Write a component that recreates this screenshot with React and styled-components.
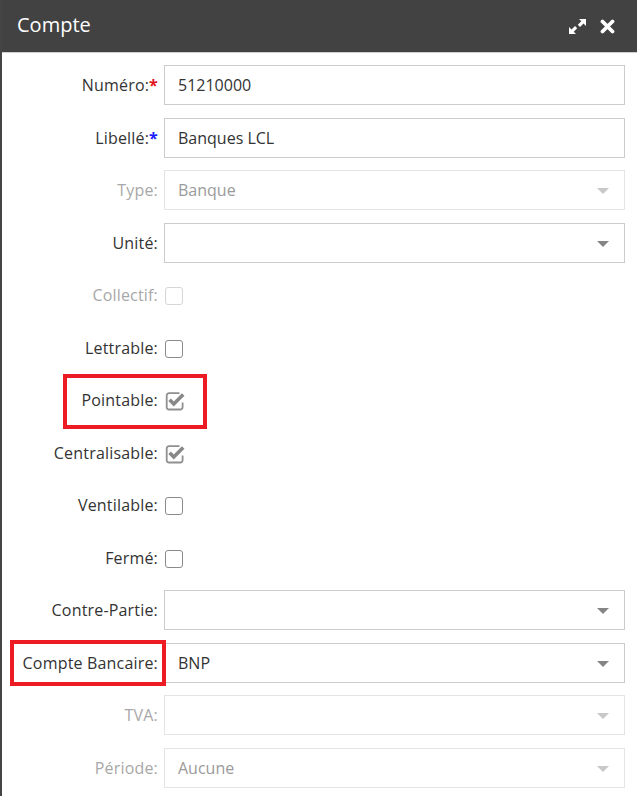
import React from "react";
import styled, { createGlobalStyle } from "styled-components";

const Global = createGlobalStyle`
  html, body { margin: 0; padding: 0; background: #fff; overflow: hidden; }
  body { font-family: "Open Sans", "Noto Sans", sans-serif; }
  * { box-sizing: border-box; }
`;

const Dialog = styled.div`
  width: 637px;
  height: 796px;
  border-left: 2px solid #454545;
  background: #fff;
  display: flex;
  flex-direction: column;
`;

const Header = styled.div`
  height: 53px;
  flex: none;
  background: #424242;
  border-bottom: 1px solid #cfcfcf;
  display: flex;
  align-items: center;
  padding: 0 22px 0 15px;
  color: #fff;
`;

const Title = styled.div`
  flex: 1;
  font-size: 20px;
  line-height: 1;
  padding-bottom: 3px;
`;

const Tools = styled.div`
  display: flex;
  align-items: center;
  gap: 13px;
`;

const Body = styled.div`
  padding: 12px 12px 0 0;
  display: flex;
  flex-direction: column;
  gap: 12.54px;
`;

const Row = styled.div`
  position: relative;
  display: grid;
  grid-template-columns: 156px 1fr;
  column-gap: 6px;
  align-items: center;
  height: 40px;
`;

const Label = styled.label`
  text-align: right;
  font-size: 16px;
  letter-spacing: 0.18px;
  color: ${(p) => (p.$disabled ? "#a8a8a8" : "#333")};
  white-space: nowrap;
`;

const Star = styled.span`
  color: ${(p) => p.$color};
  font-weight: 700;
`;

const Field = styled.div`
  position: relative;
  height: 40px;
  border: 1px solid ${(p) => (p.$disabled ? "#e4e4e4" : "#cccccc")};
  display: flex;
  align-items: center;
  padding: 0 13px;
  font-size: 16px;
  color: ${(p) => (p.$disabled ? "#9a9a9a" : "#333")};
`;

const Caret = styled.span`
  position: absolute;
  right: 15px;
  top: 17px;
  width: 0;
  height: 0;
  border-left: 6px solid transparent;
  border-right: 6px solid transparent;
  border-top: 6px solid ${(p) => (p.$disabled ? "#c8c8c8" : "#858585")};
`;

const CheckCell = styled.div`
  display: flex;
  align-items: center;
  padding-top: 2px;
`;

const Box = styled.span`
  display: inline-block;
  margin-left: 1px;
  width: 18px;
  height: 18px;
  border: 1.5px solid ${(p) => (p.$disabled ? "#d6d6d6" : "#8a8a8a")};
  border-radius: 3px;
`;

const CheckWrap = styled.span`
  display: inline-flex;
  margin-left: 1px;
  width: 22px;
  height: 20px;
`;

const Highlight = styled.div`
  position: absolute;
  border: 4px solid #ed1c24;
  pointer-events: none;
  left: ${(p) => p.$left}px;
  top: ${(p) => p.$top}px;
  width: ${(p) => p.$w}px;
  height: ${(p) => p.$h}px;
`;

const CheckedBox = () => (
  <CheckWrap>
    <svg width="22" height="20" viewBox="0 0 22 20">
      <path
        d="M14.5 2.2 H4 A2.3 2.3 0 0 0 1.7 4.5 V16.2 A2.3 2.3 0 0 0 4 18.5 H15.3 A2.3 2.3 0 0 0 17.6 16.2 V11.5"
        fill="none"
        stroke="#8f8f8f"
        strokeWidth="1.8"
      />
      <path d="M4.6 8.8 L8.8 13 L18.2 3.6" fill="none" stroke="#888" strokeWidth="3.6" strokeLinejoin="miter" />
    </svg>
  </CheckWrap>
);

const ExpandIcon = () => (
  <svg width="19" height="17" viewBox="0 0 19 17">
    <g fill="#fff">
      <polygon points="11,1 18,1 18,8 15.5,5.5 12,9 9.8,6.8 13.3,3.3" />
      <polygon points="8,16 1,16 1,9 3.5,11.5 7,8 9.2,10.2 5.7,13.7" />
    </g>
  </svg>
);

const CloseIcon = () => (
  <svg width="15" height="15" viewBox="0 0 15 15">
    <path d="M2.5 2.5 L12.5 12.5 M12.5 2.5 L2.5 12.5" stroke="#fff" strokeWidth="3.8" strokeLinecap="round" />
  </svg>
);

const rows = [
  { label: "Numéro:", star: "#e2151b", kind: "text", value: "51210000" },
  { label: "Libellé:", star: "#1a1aff", kind: "text", value: "Banques LCL" },
  { label: "Type:", kind: "select", value: "Banque", disabled: true },
  { label: "Unité:", kind: "select", value: "" },
  { label: "Collectif:", kind: "check", disabled: true },
  { label: "Lettrable:", kind: "check" },
  { label: "Pointable:", kind: "check", checked: true, hl: { left: 61, top: -6, w: 144, h: 55 } },
  { label: "Centralisable:", kind: "check", checked: true },
  { label: "Ventilable:", kind: "check" },
  { label: "Fermé:", kind: "check" },
  { label: "Contre-Partie:", kind: "select", value: "" },
  { label: "Compte Bancaire:", kind: "select", value: "BNP", hl: { left: 8, top: -3, w: 156, h: 46 } },
  { label: "TVA:", kind: "select", value: "", disabled: true },
  { label: "Période:", kind: "select", value: "Aucune", disabled: true },
];

export default function App() {
  return (
    <>
      <Global />
      <Dialog>
        <Header>
          <Title>Compte</Title>
          <Tools>
            <ExpandIcon />
            <CloseIcon />
          </Tools>
        </Header>
        <Body>
          {rows.map((r) => (
            <Row key={r.label}>
              <Label $disabled={r.disabled}>
                {r.label}
                {r.star && <Star $color={r.star}>*</Star>}
              </Label>
              {r.kind === "check" ? (
                <CheckCell>{r.checked ? <CheckedBox /> : <Box $disabled={r.disabled} />}</CheckCell>
              ) : (
                <Field $disabled={r.disabled}>
                  {r.value}
                  {r.kind === "select" && <Caret $disabled={r.disabled} />}
                </Field>
              )}
              {r.hl && <Highlight $left={r.hl.left} $top={r.hl.top} $w={r.hl.w} $h={r.hl.h} />}
            </Row>
          ))}
        </Body>
      </Dialog>
    </>
  );
}
